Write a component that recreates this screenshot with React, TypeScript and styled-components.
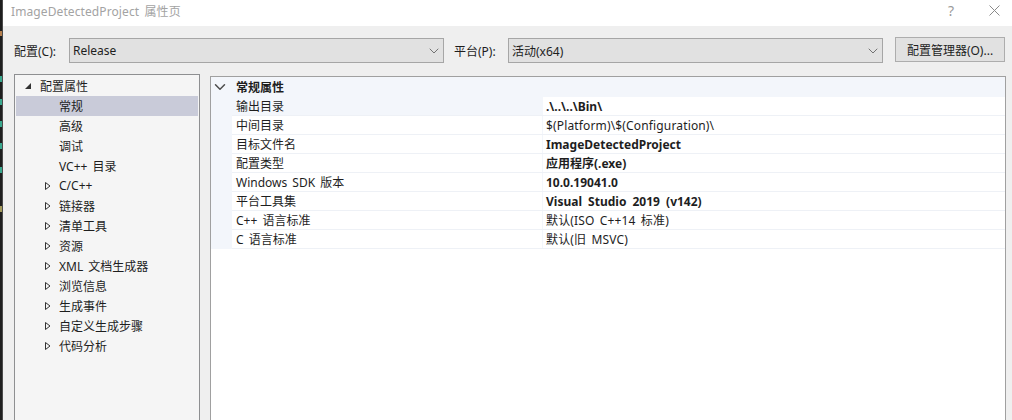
import React from 'react';
import styled, { createGlobalStyle } from 'styled-components';
import { ChevronDown } from 'lucide-react';

const GlobalStyle = createGlobalStyle`
  html, body {
    margin: 0;
    padding: 0;
    background: #efefef;
  }
  body {
    font-family: "Noto Sans", "Noto Sans CJK SC", sans-serif;
    font-size: 12px;
    word-spacing: 2px;
    color: #1e1e1e;
  }
`;

const Page = styled.div`
  width: 1012px;
  height: 420px;
  display: flex;
  overflow: hidden;
`;

const EditorEdge = styled.div`
  width: 2px;
  flex: none;
  background: #1e1e1e;
  border-right: 1px solid #4a4a4a;
  display: flex;
  flex-direction: column;
`;

const EdgeMark = styled.span<{ $top: number; $color: string; $height: number }>`
  display: block;
  flex: none;
  width: 2px;
  height: ${(p) => p.$height}px;
  margin-top: ${(p) => p.$top}px;
  background: ${(p) => p.$color};
`;

const Dialog = styled.div`
  flex: 1;
  min-width: 0;
  display: flex;
  flex-direction: column;
  background: #efefef;
`;

const TitleBar = styled.div`
  height: 26px;
  box-sizing: border-box;
  padding: 0 12px 5px 8px;
  flex: none;
  background: #fff;
  display: flex;
  align-items: center;
  color: #a3a3a3;
  font-size: 12px;
  letter-spacing: 0.1px;
`;

const TitleText = styled.div`
  flex: 1;
`;

const HelpButton = styled.div`
  width: 12px;
  margin-right: 32px;
  text-align: center;
  color: #9a9a9a;
  font-size: 14px;
`;

const CloseIcon = styled.svg`
  width: 11px;
  height: 11px;
  display: block;
`;

const Toolbar = styled.div`
  display: flex;
  align-items: center;
  height: 25px;
  margin-top: 12px;
  padding-left: 11px;
  flex: none;
`;

const FieldLabel = styled.label<{ $width: number; $gap?: number }>`
  width: ${(p) => p.$width}px;
  margin-left: ${(p) => p.$gap ?? 0}px;
  flex: none;
  white-space: nowrap;
  font-size: 12px;
`;

const Select = styled.div`
  width: 375px;
  height: 25px;
  box-sizing: border-box;
  flex: none;
  border: 1px solid #a6a6a6;
  background: #e1e1e1;
  display: flex;
  align-items: center;
  justify-content: space-between;
  padding: 0 1px 0 3px;
  font-size: 12px;
`;

const ManagerButton = styled.button`
  width: 110px;
  height: 25px;
  margin-left: 12px;
  margin-top: -2px;
  box-sizing: border-box;
  border: 1px solid #adadad;
  background: #e1e1e1;
  color: #1e1e1e;
  font: inherit;
  padding: 0;
`;

const Panels = styled.div`
  flex: 1;
  min-height: 0;
  display: flex;
  gap: 10px;
  margin-top: 11px;
  padding-left: 11px;
  padding-right: 6px;
`;

const TreePanel = styled.div`
  width: 186px;
  flex: none;
  box-sizing: border-box;
  border: 1px solid #8e8f91;
  border-bottom: none;
  background: #f5f5f5;
  padding: 1px;
`;

const TreeRow = styled.div<{ $selected?: boolean }>`
  height: 20px;
  box-sizing: border-box;
  display: flex;
  align-items: center;
  padding: 0 0 1px 9px;
  background: ${(p) => (p.$selected ? '#c9cbd9' : 'transparent')};
`;

const ArrowSlot = styled.span<{ $root?: boolean }>`
  width: ${(p) => (p.$root ? 15 : 34)}px;
  padding-right: ${(p) => (p.$root ? 9 : 8)}px;
  flex: none;
  display: flex;
  justify-content: flex-end;
  box-sizing: border-box;
`;

const TreeArrow = styled.svg`
  width: 6px;
  height: 8px;
  display: block;
`;

const GridPanel = styled.div`
  flex: 1;
  min-width: 0;
  box-sizing: border-box;
  margin-top: 2px;
  border: 1px solid #a0a0a0;
  border-bottom: none;
  background: #fff;
`;

const Gutter = styled.div`
  background: #f3f6fb;
  display: flex;
  flex-direction: column;
`;

const GroupRow = styled.div`
  height: 20px;
  display: flex;
  align-items: center;
  font-weight: bold;
`;

const GroupToggle = styled.span`
  width: 25px;
  padding-right: 7px;
  box-sizing: border-box;
  flex: none;
  display: flex;
  justify-content: center;
  color: #4d4d4d;
`;

const PropRow = styled.div`
  height: 19px;
  box-sizing: border-box;
  margin-left: 21px;
  display: grid;
  grid-template-columns: 311px 1fr;
  background: #fff;
  border-bottom: 1px solid #eef1f6;
`;

const PropName = styled.div<{ $active?: boolean }>`
  display: flex;
  align-items: center;
  padding-left: 4px;
  background: ${(p) => (p.$active ? '#f3f6fb' : 'transparent')};
  border-right: 1px solid #f3f6fb;
`;

const PropValue = styled.div<{ $bold?: boolean }>`
  display: flex;
  align-items: center;
  padding-left: 3px;
  font-weight: ${(p) => (p.$bold ? 'bold' : 'normal')};
  letter-spacing: ${(p) => (p.$bold ? 0 : 0.15)}px;
  word-spacing: ${(p) => (p.$bold ? 3 : 2)}px;
`;

const marks = [
  { top: 31, height: 5, color: '#b5804f' },
  { top: 40, height: 6, color: '#3aa88e' },
  { top: 17, height: 6, color: '#3aa88e' },
  { top: 16, height: 6, color: '#3aa88e' },
  { top: 16, height: 6, color: '#3aa88e' },
  { top: 18, height: 6, color: '#3aa88e' },
  { top: 33, height: 6, color: '#a39a5c' },
];

const tree: { label: string; state?: 'open' | 'closed'; root?: boolean; selected?: boolean }[] = [
  { label: '配置属性', state: 'open', root: true },
  { label: '常规', selected: true },
  { label: '高级' },
  { label: '调试' },
  { label: 'VC++ 目录' },
  { label: 'C/C++', state: 'closed' },
  { label: '链接器', state: 'closed' },
  { label: '清单工具', state: 'closed' },
  { label: '资源', state: 'closed' },
  { label: 'XML 文档生成器', state: 'closed' },
  { label: '浏览信息', state: 'closed' },
  { label: '生成事件', state: 'closed' },
  { label: '自定义生成步骤', state: 'closed' },
  { label: '代码分析', state: 'closed' },
];

const props: { name: string; value: string; bold?: boolean }[] = [
  { name: '输出目录', value: '.\\..\\..\\Bin\\', bold: true },
  { name: '中间目录', value: '$(Platform)\\$(Configuration)\\' },
  { name: '目标文件名', value: 'ImageDetectedProject', bold: true },
  { name: '配置类型', value: '应用程序(.exe)', bold: true },
  { name: 'Windows SDK 版本', value: '10.0.19041.0', bold: true },
  { name: '平台工具集', value: 'Visual Studio 2019 (v142)', bold: true },
  { name: 'C++ 语言标准', value: '默认(ISO C++14 标准)' },
  { name: 'C 语言标准', value: '默认(旧 MSVC)' },
];

export default function App() {
  return (
    <Page>
      <GlobalStyle />
      <EditorEdge>
        {marks.map((m, i) => (
          <EdgeMark key={i} $top={m.top} $height={m.height} $color={m.color} />
        ))}
      </EditorEdge>
      <Dialog>
        <TitleBar>
          <TitleText>ImageDetectedProject 属性页</TitleText>
          <HelpButton>?</HelpButton>
          <CloseIcon viewBox="0 0 11 11">
            <path d="M0.5 0.5 L10.5 10.5 M10.5 0.5 L0.5 10.5" stroke="#8a8a8a" strokeWidth="1" fill="none" />
          </CloseIcon>
        </TitleBar>
        <Toolbar>
          <FieldLabel $width={55}>配置(C):</FieldLabel>
          <Select>
            Release
            <ChevronDown size={16} strokeWidth={1.2} color="#555" />
          </Select>
          <FieldLabel $width={54} $gap={10}>
            平台(P):
          </FieldLabel>
          <Select>
            活动(x64)
            <ChevronDown size={16} strokeWidth={1.2} color="#555" />
          </Select>
          <ManagerButton>配置管理器(O)...</ManagerButton>
        </Toolbar>
        <Panels>
          <TreePanel>
            {tree.map((item) => (
              <TreeRow key={item.label} $selected={item.selected}>
                <ArrowSlot $root={item.root}>
                  {item.state === 'open' && (
                    <TreeArrow viewBox="0 0 6 8">
                      <path d="M0 7 L6 7 L6 1 Z" fill="#333" />
                    </TreeArrow>
                  )}
                  {item.state === 'closed' && (
                    <TreeArrow viewBox="0 0 6 8">
                      <path d="M0.5 0.5 L5 4 L0.5 7.5 Z" fill="none" stroke="#333" />
                    </TreeArrow>
                  )}
                </ArrowSlot>
                {item.label}
              </TreeRow>
            ))}
          </TreePanel>
          <GridPanel>
            <Gutter>
              <GroupRow>
                <GroupToggle>
                  <ChevronDown size={18} strokeWidth={2} />
                </GroupToggle>
                常规属性
              </GroupRow>
              {props.map((row, i) => (
                <PropRow key={row.name}>
                  <PropName $active={i === 0}>{row.name}</PropName>
                  <PropValue $bold={row.bold}>{row.value}</PropValue>
                </PropRow>
              ))}
            </Gutter>
          </GridPanel>
        </Panels>
      </Dialog>
    </Page>
  );
}
